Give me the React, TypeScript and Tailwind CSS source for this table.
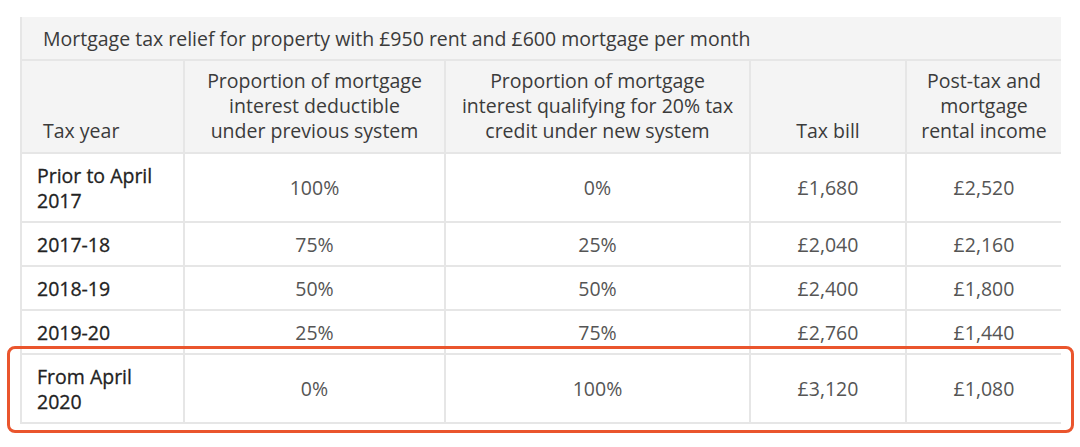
const rows = [
  { year: ["Prior to April", "2017"], prev: "100%", next: "0%", bill: "£1,680", income: "£2,520" },
  { year: ["2017-18"], prev: "75%", next: "25%", bill: "£2,040", income: "£2,160" },
  { year: ["2018-19"], prev: "50%", next: "50%", bill: "£2,400", income: "£1,800" },
  { year: ["2019-20"], prev: "25%", next: "75%", bill: "£2,760", income: "£1,440" },
  { year: ["From April", "2020"], prev: "0%", next: "100%", bill: "£3,120", income: "£1,080" },
];

const cell = "border-l-2 border-b-2 border-[#e6e6e6]";

const App = () => {
  return (
    <div className="min-h-screen bg-white pl-[20px] pt-[17px] font-['Open_Sans',sans-serif] text-[19.5px] leading-[25px] text-[#3b3b3b]">
      <div className="relative w-[1040px]">
        <table className="w-[1040px] table-fixed border-collapse">
          <colgroup>
            <col className="w-[163px]" />
            <col className="w-[261px]" />
            <col className="w-[305px]" />
            <col className="w-[156px]" />
            <col className="w-[155px]" />
          </colgroup>
          <thead className="bg-[#f4f4f4]">
            <tr className="h-[43px]">
              <th colSpan={5} className={`${cell} pl-[21px] text-left font-normal`}>
                Mortgage tax relief for property with £950 rent and £600 mortgage per month
              </th>
            </tr>
            <tr className="h-[93px]">
              <th className={`${cell} pb-[9px] pl-[21px] text-left align-bottom font-normal`}>Tax year</th>
              <th className={`${cell} px-[18px] pb-[9px] align-bottom font-normal`}>
                Proportion of mortgage interest deductible under previous system
              </th>
              <th className={`${cell} px-[10px] pb-[9px] align-bottom font-normal`}>
                Proportion of mortgage interest qualifying for 20% tax credit under new system
              </th>
              <th className={`${cell} pb-[9px] align-bottom font-normal`}>Tax bill</th>
              <th className={`${cell} px-[8px] pb-[9px] align-bottom font-normal`}>
                Post-tax and mortgage rental income
              </th>
            </tr>
          </thead>
          <tbody>
            {rows.map((row, i) => (
              <tr key={i} className={row.year.length > 1 ? "h-[69px]" : "h-[44px]"}>
                <td className={`${cell} pl-[15px] [-webkit-text-stroke:0.3px_#222] text-[#222]`}>
                  {row.year.map((line) => (
                    <div key={line}>{line}</div>
                  ))}
                </td>
                <td className={`${cell} text-center text-[#555]`}>{row.prev}</td>
                <td className={`${cell} text-center text-[#555]`}>{row.next}</td>
                <td className={`${cell} text-center text-[#555]`}>{row.bill}</td>
                <td className={`${cell} text-center text-[#555]`}>{row.income}</td>
              </tr>
            ))}
          </tbody>
        </table>
        <div className="pointer-events-none absolute left-[-13px] top-[329px] h-[87px] w-[1067px] rounded-[8px] border-[3px] border-[#ea552d]" />
      </div>
    </div>
  );
};

export default App;
